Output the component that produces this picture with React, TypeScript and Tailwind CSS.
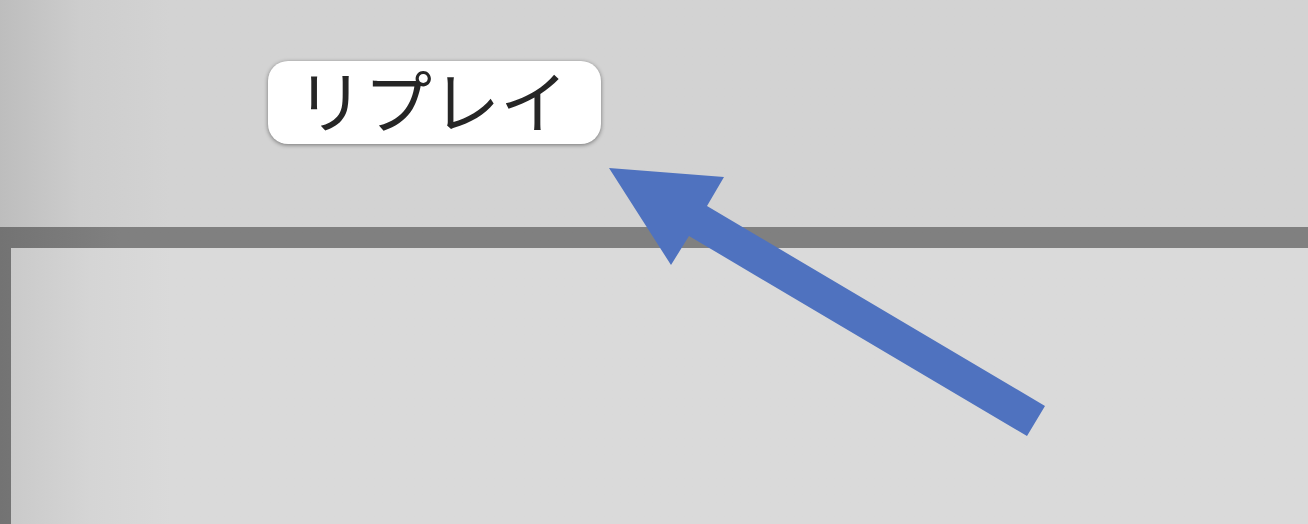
export default function App() {
  return (
    <main className="relative flex min-h-screen flex-col overflow-hidden bg-[#d3d3d3] font-['Noto_Sans_CJK_JP',sans-serif]">
      <header className="bg-linear-to-r from-[#bdbdbd] via-[#cdcdcd] via-[80px] to-[#d3d3d3] to-[170px] pt-[61px] pb-[83px] pl-[268px]">
        <button
          type="button"
          className="flex h-[83px] items-center justify-center rounded-[20px] bg-white pr-[33px] pb-2 pl-7 text-[68px] leading-none text-[#262626] shadow-[0_1px_4px_rgba(0,0,0,0.45)]"
        >
          リプレイ
        </button>
      </header>
      <section className="flex flex-1 bg-linear-to-r from-[#737373] to-[#808080] to-[120px] pt-[21px] pl-[11px]">
        <div className="flex-1 bg-linear-to-r from-[#cacaca] via-[#d5d5d5] via-[80px] to-[#dadada] to-[160px]" />
      </section>
      <svg
        className="pointer-events-none absolute top-0 left-0"
        width="1308"
        height="524"
        viewBox="0 0 1308 524"
        aria-hidden="true"
      >
        <path d="M609 168 L724 177 L707 206 L1045 406 L1027 436 L689 236 L671 265 Z" fill="#4f72bf" />
      </svg>
    </main>
  );
}
